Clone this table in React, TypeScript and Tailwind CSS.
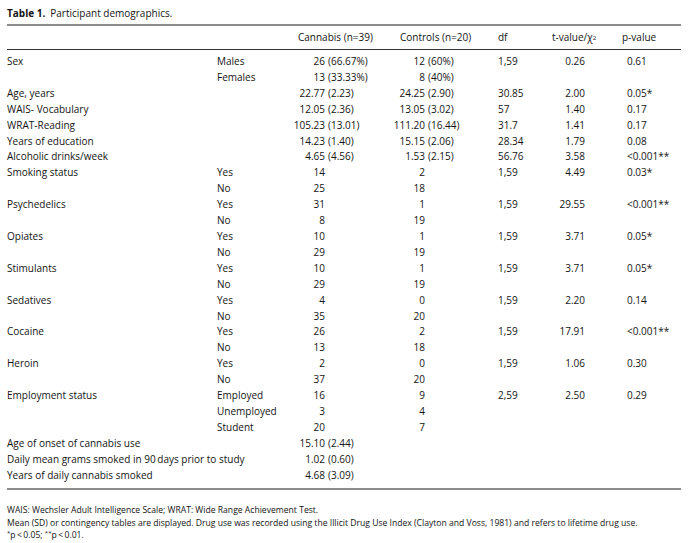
import React from "react";

type Row = {
  label?: string;
  sub?: string;
  c?: [string, string?];
  k?: [string, string?];
  df?: string;
  t?: string;
  p?: string;
};

const rows: Row[] = [
  { label: "Sex", sub: "Males", c: ["26", "(66.67%)"], k: ["12", "(60%)"], df: "1,59", t: "0.26", p: "0.61" },
  { sub: "Females", c: ["13", "(33.33%)"], k: ["8", "(40%)"] },
  { label: "Age, years", c: ["22.77", "(2.23)"], k: ["24.25", "(2.90)"], df: "30.85", t: "2.00", p: "0.05*" },
  { label: "WAIS- Vocabulary", c: ["12.05", "(2.36)"], k: ["13.05", "(3.02)"], df: "57", t: "1.40", p: "0.17" },
  { label: "WRAT-Reading", c: ["105.23", "(13.01)"], k: ["111.20", "(16.44)"], df: "31.7", t: "1.41", p: "0.17" },
  { label: "Years of education", c: ["14.23", "(1.40)"], k: ["15.15", "(2.06)"], df: "28.34", t: "1.79", p: "0.08" },
  { label: "Alcoholic drinks/week", c: ["4.65", "(4.56)"], k: ["1.53", "(2.15)"], df: "56.76", t: "3.58", p: "<0.001**" },
  { label: "Smoking status", sub: "Yes", c: ["14"], k: ["2"], df: "1,59", t: "4.49", p: "0.03*" },
  { sub: "No", c: ["25"], k: ["18"] },
  { label: "Psychedelics", sub: "Yes", c: ["31"], k: ["1"], df: "1,59", t: "29.55", p: "<0.001**" },
  { sub: "No", c: ["8"], k: ["19"] },
  { label: "Opiates", sub: "Yes", c: ["10"], k: ["1"], df: "1,59", t: "3.71", p: "0.05*" },
  { sub: "No", c: ["29"], k: ["19"] },
  { label: "Stimulants", sub: "Yes", c: ["10"], k: ["1"], df: "1,59", t: "3.71", p: "0.05*" },
  { sub: "No", c: ["29"], k: ["19"] },
  { label: "Sedatives", sub: "Yes", c: ["4"], k: ["0"], df: "1,59", t: "2.20", p: "0.14" },
  { sub: "No", c: ["35"], k: ["20"] },
  { label: "Cocaine", sub: "Yes", c: ["26"], k: ["2"], df: "1,59", t: "17.91", p: "<0.001**" },
  { sub: "No", c: ["13"], k: ["18"] },
  { label: "Heroin", sub: "Yes", c: ["2"], k: ["0"], df: "1,59", t: "1.06", p: "0.30" },
  { sub: "No", c: ["37"], k: ["20"] },
  { label: "Employment status", sub: "Employed", c: ["16"], k: ["9"], df: "2,59", t: "2.50", p: "0.29" },
  { sub: "Unemployed", c: ["3"], k: ["4"] },
  { sub: "Student", c: ["20"], k: ["7"] },
  { label: "Age of onset of cannabis use", c: ["15.10", "(2.44)"] },
  { label: "Daily mean grams smoked in 90\u2009days prior to study", c: ["1.02", "(0.60)"] },
  { label: "Years of daily cannabis smoked", c: ["4.68", "(3.09)"] },
];

function Val({ v, w }: { v?: [string, string?]; w: string }) {
  if (!v) return <div />;
  return (
    <div className="flex whitespace-nowrap">
      <span className={`${w} text-right shrink-0`}>{v[0]}</span>
      {v[1] ? <span className="pl-[3px]">{v[1]}</span> : null}
    </div>
  );
}

const grid = "grid grid-cols-[210px_73px_102px_100px_53px_67px_68px]";

export default function App() {
  return (
    <div
      className="w-[688px] h-[543px] bg-white text-[#141414] px-[7px] overflow-hidden"
      style={{ fontFamily: '"Open Sans", "Noto Sans", sans-serif' }}
    >
      <div className="pt-[6px] text-[10px] leading-[14px] whitespace-nowrap">
        <span className="font-bold">Table 1.</span>
        <span className="pl-[5px]">Participant demographics.</span>
      </div>
      <div className="mt-[4px] h-[2px] w-[674px] bg-[#8c8c8c]" />
      <div className={`${grid} h-[23px] items-center text-[10px] whitespace-nowrap`}>
        <div />
        <div />
        <div className="pl-[8px]">Cannabis (n=39)</div>
        <div className="pl-[8px]">Controls (n=20)</div>
        <div className="pl-[6px]">df</div>
        <div className="pl-[7px]">
          t-value/χ<sup className="text-[6px] relative -top-[1px]">2</sup>
        </div>
        <div className="pl-[10px]">p-value</div>
      </div>
      <div className="h-[1px] w-[674px] bg-[#333]" />
      <div className="pt-[4px] text-[10px]">
        {rows.map((r, i) => (
          <div key={i} className={`${grid} h-[15.92px] leading-[15.92px] whitespace-nowrap`}>
            <div>{r.label ?? ""}</div>
            <div>{r.sub ?? ""}</div>
            <Val v={r.c} w="w-[35px]" />
            <Val v={r.k} w="w-[33px]" />
            <div className="pl-[6px]">{r.df ?? ""}</div>
            <div className="text-right pr-[27px]">{r.t ?? ""}</div>
            <div className="pl-[15px]">{r.p ?? ""}</div>
          </div>
        ))}
      </div>
      <div className="mt-[5px] h-[2px] w-[674px] bg-[#8c8c8c]" />
      <div className="mt-[14px] text-[8.6px] leading-[12.5px] whitespace-nowrap">
        <div>WAIS: Wechsler Adult Intelligence Scale; WRAT: Wide Range Achievement Test.</div>
        <div>
          Mean (SD) or contingency tables are displayed. Drug use was recorded using the Illicit Drug Use Index (Clayton and Voss, 1981) and refers to lifetime drug use.
        </div>
        <div>
          <sup className="text-[6px]">*</sup>p{"\u2009<\u2009"}0.05; <sup className="text-[6px]">**</sup>p{"\u2009<\u2009"}0.01.
        </div>
      </div>
    </div>
  );
}
